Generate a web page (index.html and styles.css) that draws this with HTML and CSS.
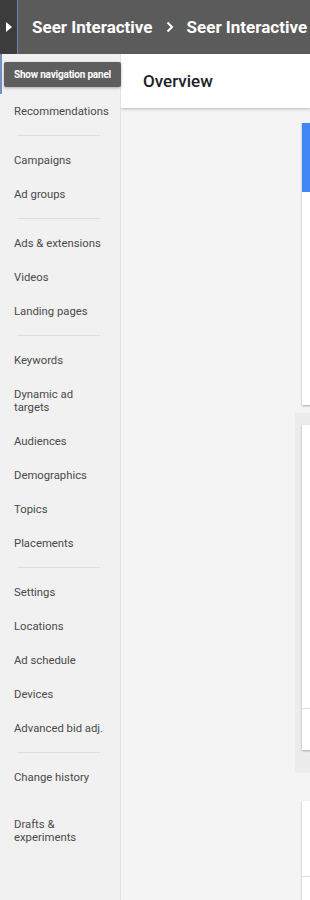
FILE: index.html
```html
<!DOCTYPE html>
<html lang="en">
<head>
    <meta charset="UTF-8">
    <meta name="viewport" content="width=device-width, initial-scale=1.0">
    <title>Overview - Seer Interactive</title>
    <link rel="stylesheet" href="styles.css">
</head>
<body>
    <header class="topbar">
        <button class="nav-toggle" aria-label="Show navigation panel">
            <svg width="6" height="10" viewBox="0 0 6 10"><polygon points="0,0 6,5 0,10" fill="#fff"/></svg>
        </button>
        <div class="crumbs">
            <span>Seer Interactive</span>
            <svg class="chev" width="8" height="12" viewBox="0 0 8 12"><polyline points="1.5,1.5 6,6 1.5,10.5" fill="none" stroke="#fff" stroke-width="2"/></svg>
            <span>Seer Interactive</span>
        </div>
    </header>

    <div class="layout">
        <nav class="sidebar">
            <div class="tooltip">Show navigation panel</div>
            <div class="nav-top"></div>
            <a class="nav-item">Recommendations</a>
            <hr class="nav-sep">
            <a class="nav-item">Campaigns</a>
            <a class="nav-item">Ad groups</a>
            <hr class="nav-sep">
            <a class="nav-item">Ads &amp; extensions</a>
            <a class="nav-item">Videos</a>
            <a class="nav-item">Landing pages</a>
            <hr class="nav-sep">
            <a class="nav-item">Keywords</a>
            <a class="nav-item tall">Dynamic ad<br>targets</a>
            <a class="nav-item">Audiences</a>
            <a class="nav-item">Demographics</a>
            <a class="nav-item">Topics</a>
            <a class="nav-item">Placements</a>
            <hr class="nav-sep">
            <a class="nav-item">Settings</a>
            <a class="nav-item">Locations</a>
            <a class="nav-item">Ad schedule</a>
            <a class="nav-item">Devices</a>
            <a class="nav-item">Advanced bid adj.</a>
            <hr class="nav-sep">
            <a class="nav-item">Change history</a>
            <a class="nav-item tall gap">Drafts &amp;<br>experiments</a>
        </nav>

        <main class="main">
            <div class="page-head">
                <h1>Overview</h1>
            </div>
            <div class="content">
                <section class="card card-chart">
                    <div class="card-band"></div>
                </section>
                <div class="card-group">
                    <section class="card card-table">
                        <div class="card-body"></div>
                        <div class="card-foot"></div>
                    </section>
                </div>
                <section class="card card-last">
                    <div class="card-body short"></div>
                    <div class="card-foot"></div>
                </section>
            </div>
        </main>
    </div>
</body>
</html>
```

FILE: styles.css
```css
body {
    margin: 0;
    font-family: Roboto, 'Liberation Sans', Arial, sans-serif;
    background-color: #f4f4f4;
    color: #3c4043;
    overflow: hidden;
}

.topbar {
    height: 54px;
    display: flex;
    align-items: stretch;
    background-color: #5b5b5b;
    color: #fff;
}

.nav-toggle {
    width: 18px;
    padding: 0;
    border: none;
    border-right: 1px solid #6a86b8;
    background-color: #3c3c3c;
    display: flex;
    align-items: center;
    justify-content: center;
}

.crumbs {
    display: flex;
    align-items: center;
    gap: 13px;
    padding-left: 14px;
    font-size: 17px;
    font-weight: 700;
    white-space: nowrap;
}

.layout {
    display: flex;
}

/* left navigation */
.sidebar {
    position: relative;
    width: 121px;
    flex-shrink: 0;
    min-height: 846px;
    background-color: #f1f1f1;
    border-right: 1px solid #e2e2e2;
    box-sizing: border-box;
}

.nav-top {
    height: 40px;
    border-left: 2px solid #7590c4;
    box-sizing: border-box;
}

.nav-item {
    display: flex;
    align-items: center;
    height: 34px;
    padding-left: 14px;
    font-size: 11.3px;
    line-height: 13px;
    color: #4a4a4a;
}

.nav-item.tall {
    height: 47px;
}

.nav-item.gap {
    margin-top: 13px;
}

.nav-sep {
    height: 1px;
    margin: 7px 20px 7px 17px;
    border: none;
    background-color: #dedede;
}

.tooltip {
    position: absolute;
    top: 8px;
    left: 4px;
    width: 117px;
    height: 25px;
    display: flex;
    align-items: center;
    justify-content: center;
    background-color: #5e5e5e;
    color: #fff;
    font-size: 10px;
    font-weight: 700;
    letter-spacing: -0.2px;
    border-radius: 2px;
    box-shadow: 0 1px 3px rgba(0, 0, 0, 0.3);
    white-space: nowrap;
}

/* main area */
.main {
    flex: 1;
    min-width: 0;
    overflow: hidden;
}

.page-head {
    height: 54px;
    display: flex;
    align-items: center;
    padding-left: 22px;
    background-color: #fff;
    box-shadow: 0 1px 3px rgba(0, 0, 0, 0.25);
}

.page-head h1 {
    margin: 0;
    font-size: 17px;
    font-weight: 500;
    color: #202124;
}

.content {
    padding: 15px 0 0 181px;
}

.card {
    width: 240px;
    background-color: #fff;
    box-shadow: 0 1px 2px rgba(0, 0, 0, 0.3);
}

.card-chart {
    height: 282px;
}

.card-band {
    height: 69px;
    background-color: #4285f4;
}

.card-group {
    margin: 8px 0 0 -7px;
    padding: 12px 0 23px 7px;
    background-color: #ececec;
}

.card-table .card-body {
    height: 283px;
}

.card-foot {
    height: 41px;
    border-top: 1px solid #e0e0e0;
}

.card-last {
    margin-top: 28px;
}

.card-body.short {
    height: 75px;
}
```
